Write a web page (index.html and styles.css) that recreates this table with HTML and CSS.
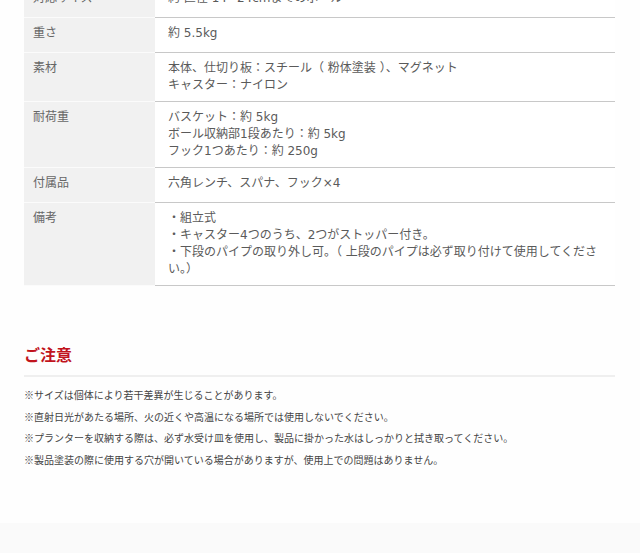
FILE: index.html
```html
<!DOCTYPE html>
<html lang="ja">
<head>
<meta charset="utf-8">
<link rel="stylesheet" href="styles.css">
</head>
<body>
<main class="page">
  <table class="spec">
    <tbody>
      <tr><th>対応サイズ</th><td>約 直径 14~24cmまでのボール</td></tr>
      <tr><th>重さ</th><td>約 5.5kg</td></tr>
      <tr><th>素材</th><td>本体、仕切り板：スチール（ 粉体塗装 ）、マグネット<br>キャスター：ナイロン</td></tr>
      <tr><th>耐荷重</th><td>バスケット：約 5kg<br>ボール収納部1段あたり：約 5kg<br>フック1つあたり：約 250g</td></tr>
      <tr><th>付属品</th><td>六角レンチ、スパナ、フック×4</td></tr>
      <tr><th>備考</th><td>・組立式<br>・キャスター4つのうち、2つがストッパー付き。<br>・下段のパイプの取り外し可。（ 上段のパイプは必ず取り付けて使用してください。）</td></tr>
    </tbody>
  </table>

  <section class="notes">
    <h2 class="notes-title">ご注意</h2>
    <ul class="notes-list">
      <li>※サイズは個体により若干差異が生じることがあります。</li>
      <li>※直射日光があたる場所、火の近くや高温になる場所では使用しないでください。</li>
      <li>※プランターを収納する際は、必ず水受け皿を使用し、製品に掛かった水はしっかりと拭き取ってください。</li>
      <li>※製品塗装の際に使用する穴が開いている場合がありますが、使用上での問題はありません。</li>
    </ul>
  </section>
</main>
<footer class="footer"></footer>
</body>
</html>
```

FILE: styles.css
```css
html, body {
  margin: 0;
  padding: 0;
  background: #fefefe;
  font-family: "Noto Sans CJK JP", "Noto Sans", sans-serif;
}

.page {
  margin: -17px 0 0 24px;
  width: 591px;
}

.spec {
  border-collapse: separate;
  border-spacing: 0;
  width: 591px;
  table-layout: fixed;
  font-family: "DejaVu Sans", "Noto Sans CJK JP", sans-serif;
  font-size: 12px;
  line-height: 17px;
}

.spec th {
  width: 131px;
  box-sizing: border-box;
  text-align: left;
  font-weight: normal;
  vertical-align: top;
  color: #666;
  background: #f1f1f1;
  padding: 7px 0 7px 9px;
  height: 20px;
  border-bottom: 1px solid #fbfbfb;
}

.spec td {
  vertical-align: top;
  color: #5a5a5a;
  background: #fff;
  padding: 7px 7px 7px 13px;
  height: 20px;
  border-bottom: 1px solid #c8c8c8;
}

.notes {
  margin-top: 56px;
}

.notes-title {
  margin: 0;
  font-size: 16px;
  line-height: 24px;
  font-weight: bold;
  color: #c1141d;
  padding-bottom: 9px;
  border-bottom: 2px solid #efefef;
}

.notes-list {
  list-style: none;
  margin: 7px 0 0;
  padding: 0;
  font-size: 10px;
  line-height: 21.6px;
  color: #444;
}

.footer {
  margin-top: 53px;
  height: 40px;
  background: #fafafa;
}
```
